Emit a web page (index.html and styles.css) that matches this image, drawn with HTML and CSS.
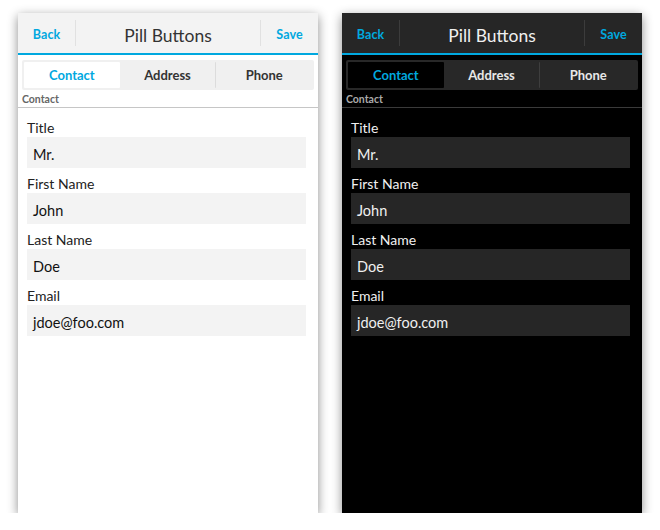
FILE: index.html
```html
<!DOCTYPE html>
<html>
<head>
<meta charset="utf-8">
<link rel="stylesheet" href="styles.css">
</head>
<body>
<div class="stage">
  <div class="phone light">
    <div class="titlebar">
      <div class="tb-btn">Back</div>
      <div class="tb-title">Pill Buttons</div>
      <div class="tb-btn">Save</div>
    </div>
    <div class="pills">
      <div class="pill active">Contact</div>
      <div class="pill">Address</div>
      <div class="pill sep">Phone</div>
    </div>
    <div class="section">Contact</div>
    <div class="form">
      <div class="group"><div class="label">Title</div><div class="field">Mr.</div></div>
      <div class="group"><div class="label">First Name</div><div class="field">John</div></div>
      <div class="group"><div class="label">Last Name</div><div class="field">Doe</div></div>
      <div class="group"><div class="label">Email</div><div class="field">jdoe@foo.com</div></div>
    </div>
  </div>
  <div class="phone dark">
    <div class="titlebar">
      <div class="tb-btn">Back</div>
      <div class="tb-title">Pill Buttons</div>
      <div class="tb-btn">Save</div>
    </div>
    <div class="pills">
      <div class="pill active">Contact</div>
      <div class="pill">Address</div>
      <div class="pill sep">Phone</div>
    </div>
    <div class="section">Contact</div>
    <div class="form">
      <div class="group"><div class="label">Title</div><div class="field">Mr.</div></div>
      <div class="group"><div class="label">First Name</div><div class="field">John</div></div>
      <div class="group"><div class="label">Last Name</div><div class="field">Doe</div></div>
      <div class="group"><div class="label">Email</div><div class="field">jdoe@foo.com</div></div>
    </div>
  </div>
</div>
</body>
</html>
```

FILE: styles.css
```css
* { box-sizing: border-box; }
html, body { margin: 0; padding: 0; background: #ffffff; }
body { font-family: Lato, "Open Sans", sans-serif; }

.stage {
  display: flex;
  gap: 24px;
  padding: 13px 0 0 18px;
}

.phone {
  width: 300px;
  height: 500px;
  box-shadow: 0 3px 10px rgba(0, 0, 0, 0.45);
  display: flex;
  flex-direction: column;
}

.titlebar {
  height: 42px;
  border-bottom: 2px solid #00a8df;
  display: flex;
  align-items: center;
}
.tb-btn {
  width: 57px;
  padding-top: 2px;
  text-align: center;
  color: #00a8df;
  font-weight: bold;
  font-size: 12.5px;
  letter-spacing: 0.1px;
}
.tb-title {
  flex: 1;
  height: 26px;
  line-height: 26px;
  padding-top: 3px;
  text-align: center;
  font-size: 17.5px;
  border-left: 1px solid;
  border-right: 1px solid;
}

.pills {
  margin: 5px 4px 0;
  height: 30px;
  padding: 2px;
  display: flex;
  border-radius: 2px;
}
.pill {
  flex: 1;
  display: flex;
  align-items: center;
  justify-content: center;
  font-weight: bold;
  font-size: 13px;
  border-radius: 1px;
}
.pill.sep { border-left: 1px solid; }
.pill.active { color: #00a8df; }

.section {
  height: 18px;
  padding: 3px 0 0 4px;
  font-size: 10.5px;
  font-weight: bold;
  border-bottom: 1px solid;
}

.form {
  padding: 11px 12px 0 9px;
  display: flex;
  flex-direction: column;
  gap: 7px;
}
.label {
  font-size: 14px;
  line-height: 18px;
}
.field {
  height: 31px;
  padding: 9px 0 0 6px;
  font-size: 14.5px;
  line-height: 18px;
}

/* light theme */
.light { background: #ffffff; }
.light .titlebar { background: #f3f3f3; }
.light .tb-title { color: #333333; border-color: #e1e1e1; }
.light .pills { background: #f0f0f0; }
.light .pill { color: #333333; }
.light .pill.sep { border-color: #dcdcdc; }
.light .pill.active { background: #ffffff; color: #00a8df; }
.light .section { color: #666666; border-color: #c6c6c6; }
.light .label { color: #222222; }
.light .field { background: #f3f3f3; color: #111111; }

/* dark theme */
.dark { background: #000000; }
.dark .titlebar { background: #262626; }
.dark .tb-title { color: #f0f0f0; border-color: #3c3c3c; }
.dark .pills { background: #282828; }
.dark .pill { color: #e8e8e8; }
.dark .pill.sep { border-color: #3e3e3e; }
.dark .pill.active { background: #000000; color: #00a8df; }
.dark .section { color: #aaaaaa; border-color: #3a3a3a; }
.dark .label { color: #f0f0f0; }
.dark .field { background: #262626; color: #f0f0f0; }
```
